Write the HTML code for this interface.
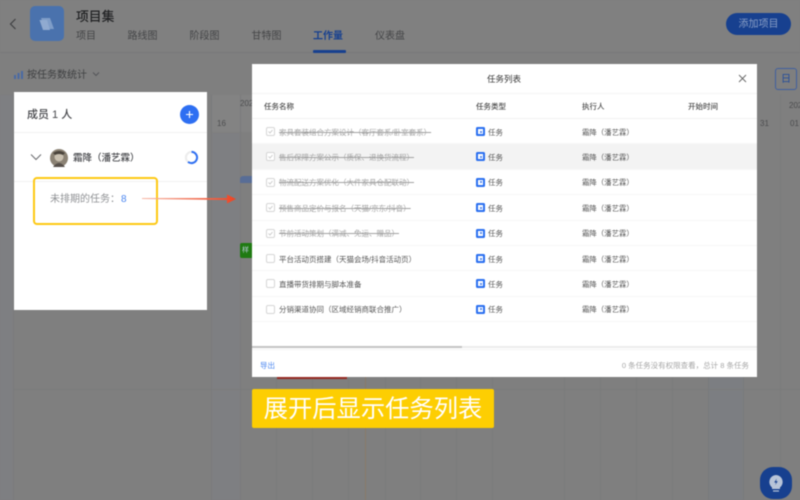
<!DOCTYPE html>
<html><head><meta charset="utf-8">
<style>
*{box-sizing:border-box;margin:0;padding:0}
html,body{width:800px;height:500px;overflow:hidden;background:#7f7f7f;font-family:"Liberation Sans","Noto Sans CJK SC",sans-serif}
.a{position:absolute;white-space:nowrap}
#root{position:relative;width:800px;height:500px;overflow:hidden;filter:blur(.4px)}
.vl{position:absolute;width:1px;top:95px;bottom:0;background:#7a7b7c}
.hl{position:absolute;left:13px;right:0;height:1px;background:#7a7b7c}
.tab{position:absolute;top:30px;font-size:10px;line-height:14px;color:#444547}
.row{position:absolute;left:252px;width:505px;height:25.4px;border-bottom:1px solid #f6f6f6}
.cb{position:absolute;left:13.5px;top:8px;width:9px;height:9px;border:1px solid #d6d6d6;border-radius:2px;background:#fff}
.cb svg{position:absolute;left:0;top:0}
.nm{position:absolute;left:27px;top:6.5px;font-size:7.5px;line-height:13px;color:#555;white-space:nowrap}
.done .nm{color:#a2a2a2;text-decoration:line-through}
.ic{position:absolute;left:224px;top:8px;width:9px;height:9px;border-radius:1.5px;background:#2a6ff0}
.ic i{position:absolute;left:2px;top:2px;width:5px;height:5px;background:#fff;display:block}
.ic i:after{content:"";position:absolute;left:1.5px;top:1.5px;width:2px;height:2px;background:#5f90ee}
.ty{position:absolute;left:236px;top:6.5px;font-size:7.5px;line-height:13px;color:#555}
.ex{position:absolute;left:330px;top:6.5px;font-size:7.4px;line-height:13px;color:#555;white-space:nowrap}
.th{position:absolute;top:100px;font-size:7.5px;line-height:13px;color:#4c4c4c;font-weight:500}
</style></head><body><div id="root">

<div class="a" style="left:0;top:0;width:800px;height:52px;background:#808080"></div>
<div class="a" style="left:0;top:52px;width:800px;height:1px;background:#78797a"></div>

<div class="a" style="left:0;top:95px;width:13px;height:405px;background:#7e7f82"></div>
<div class="a" style="left:211px;top:133px;width:29px;height:367px;background:#7e7f82"></div>
<div class="a" style="left:212px;top:95px;width:40px;height:37px;background:#838383"></div>
<div class="a" style="left:708px;top:377px;width:35px;height:123px;background:#7c7e82"></div>

<svg class="a" style="left:8px;top:17px" width="10" height="14" viewBox="0 0 10 14"><path d="M7.5 2 L2.5 7 L7.5 12" fill="none" stroke="#3f4042" stroke-width="1.2"/></svg>
<div class="a" style="left:30px;top:6px;width:34px;height:35px;border-radius:5px;background:#4a72ad"></div>
<svg class="a" style="left:38px;top:15px" width="20" height="18" viewBox="0 0 20 18"><path d="M3 3 H12 L16 14 H7 Z" fill="#7f9dc8"/><path d="M1.5 5 H9 L12 15 H5 Z" fill="#90aad0"/></svg>
<div class="a" style="left:76px;top:8px;font-size:12.8px;line-height:17px;color:#1f2022;font-weight:500">项目集</div>
<div class="tab" style="left:76px">项目</div>
<div class="tab" style="left:127.5px">路线图</div>
<div class="tab" style="left:189.5px">阶段图</div>
<div class="tab" style="left:251.5px">甘特图</div>
<div class="tab" style="left:313px;color:#17408f;font-weight:700">工作量</div>
<div class="tab" style="left:375px">仪表盘</div>
<div class="a" style="left:313px;top:50px;width:33px;height:2.5px;border-radius:1px;background:#17408f"></div>
<div class="a" style="left:726px;top:13px;width:65px;height:22px;border-radius:11px;background:#17408f"></div>
<div class="a" style="left:726px;top:15px;width:65px;height:22px;color:#8a9fc6;font-size:10px;line-height:20px;text-align:center">添加项目</div>

<svg class="a" style="left:13px;top:69px" width="11" height="11" viewBox="0 0 11 11"><rect x="1" y="6" width="2" height="4" fill="#4a6aa5"/><rect x="4.5" y="4" width="2" height="6" fill="#4a6aa5"/><rect x="8" y="2" width="2" height="8" fill="#4a6aa5"/></svg>
<div class="a" style="left:27px;top:69px;font-size:10px;line-height:14px;color:#3f4042">按任务数统计</div>
<svg class="a" style="left:91px;top:71px" width="10" height="7" viewBox="0 0 10 7"><path d="M2 1.5 L5 4.5 L8 1.5" fill="none" stroke="#55565a" stroke-width="1"/></svg>

<div class="vl" style="left:13px"></div>
<div class="vl" style="left:211px"></div>
<div class="vl" style="left:240px"></div>
<div class="vl" style="left:276px"></div>
<div class="vl" style="left:312px"></div>
<div class="vl" style="left:348px"></div>
<div class="vl" style="left:385px"></div>
<div class="vl" style="left:420px"></div>
<div class="vl" style="left:456px"></div>
<div class="vl" style="left:492px"></div>
<div class="vl" style="left:564px"></div>
<div class="vl" style="left:600px"></div>
<div class="vl" style="left:636px"></div>
<div class="vl" style="left:672px"></div>
<div class="vl" style="left:708px"></div>
<div class="vl" style="left:743px"></div>
<div class="vl" style="left:780px"></div>
<div class="hl" style="top:389px"></div>
<div class="a" style="left:365px;top:377px;width:1px;height:123px;background:#8a7a68"></div>

<div class="a" style="left:775px;top:68px;width:22px;height:22px;border:1px solid #3f5f9f;border-radius:3px"></div>
<div class="a" style="left:775px;top:70px;width:22px;height:20px;color:#1f4a9c;font-size:10px;line-height:20px;text-align:center">日</div>
<div class="a" style="left:760px;top:118px;font-size:8px;line-height:11px;color:#4c4d4f">31</div>
<div class="a" style="left:790px;top:118px;font-size:8px;line-height:11px;color:#4c4d4f">01</div>
<div class="a" style="left:789px;top:100px;font-size:8px;line-height:11px;color:#4c4d4f">202</div>
<div class="a" style="left:240px;top:98px;font-size:8px;line-height:11px;color:#4c4d4f">202</div>
<div class="a" style="left:217px;top:118px;font-size:8px;line-height:11px;color:#4c4d4f">16</div>

<div class="a" style="left:240px;top:176px;width:12px;height:7px;background:#586d96;border-radius:3px 0 0 0"></div>
<div class="a" style="left:240px;top:243px;width:12px;height:15px;background:#1f7a12;border-radius:2px 0 0 2px;color:#bcd;font-size:7px;line-height:15px;padding-left:2px;overflow:hidden">样</div>
<div class="a" style="left:277px;top:377px;width:70px;height:2px;background:#962a22"></div>

<!-- left panel -->
<div class="a" style="left:14px;top:92px;width:193px;height:218px;background:#fff"></div>
<div class="a" style="left:14px;top:132px;width:193px;height:1px;background:#f2f2f2"></div>
<div class="a" style="left:14px;top:181px;width:193px;height:1px;background:#f2f2f2"></div>
<div class="a" style="left:27px;top:107px;font-size:11px;line-height:16px;color:#45464a;font-weight:500">成员 1 人</div>
<div class="a" style="left:180px;top:105px;width:19px;height:19px;border-radius:50%;background:#2e6ff2"></div>
<svg class="a" style="left:180px;top:105px" width="19" height="19" viewBox="0 0 19 19"><path d="M9.5 6 V13 M6 9.5 H13" stroke="#fff" stroke-width="1.1"/></svg>
<svg class="a" style="left:30px;top:153px" width="12" height="9" viewBox="0 0 12 9"><path d="M1 1.5 L6 6.5 L11 1.5" fill="none" stroke="#6a6b6e" stroke-width="1"/></svg>
<svg class="a" style="left:50px;top:149px" width="18" height="18" viewBox="0 0 18 18"><circle cx="9" cy="9" r="9" fill="#8b8274"/><circle cx="9" cy="8" r="4.5" fill="#c9c0b0"/><path d="M3 4 Q9 0 15 4 L13 6 Q9 4 5 6 Z" fill="#4a443c"/><path d="M3 18 Q9 10 15 18 Z" fill="#57504a"/></svg>
<div class="a" style="left:73px;top:152px;font-size:9.5px;line-height:13px;color:#45464a;font-weight:500">霜降（潘艺霖）</div>
<svg class="a" style="left:184px;top:150px" width="15" height="15" viewBox="0 0 15 15"><circle cx="7.5" cy="7.5" r="5.6" fill="none" stroke="#ececec" stroke-width="2"/><path d="M7.5 1.9 A5.6 5.6 0 1 1 4 11.9" fill="none" stroke="#2e6ff2" stroke-width="2"/></svg>
<div class="a" style="left:33px;top:177px;width:125px;height:48px;border:2px solid #fdc813;border-radius:4px"></div>
<div class="a" style="left:50px;top:193px;font-size:10px;line-height:14px;color:#8f9194">未排期的任务：<span style="color:#4a86f0;margin-left:1px">8</span></div>
<svg class="a" style="left:140px;top:192px" width="100" height="14" viewBox="0 0 100 14"><defs><linearGradient id="g" x1="0" x2="1" y1="0" y2="0"><stop offset="0" stop-color="#f7b9a8"/><stop offset="1" stop-color="#ee4422"/></linearGradient></defs><path d="M2 6 L87 6 V2.5 L96 7 L87 11.5 V8 L2 7 Z" fill="url(#g)"/></svg>

<!-- modal -->
<div class="a" style="left:252px;top:64px;width:505px;height:313px;background:#fff"></div>
<div class="a" style="left:487px;top:72.5px;font-size:8.5px;line-height:13px;color:#333">任务列表</div>
<svg class="a" style="left:737px;top:73px" width="11" height="11" viewBox="0 0 11 11"><path d="M2 2 L9 9 M9 2 L2 9" stroke="#666" stroke-width="0.9"/></svg>
<div class="a" style="left:252px;top:93px;width:505px;height:1px;background:#f4f4f4"></div>
<div class="a" style="left:252px;top:118px;width:505px;height:1px;background:#f2f2f2"></div>
<div class="th" style="left:264px">任务名称</div>
<div class="th" style="left:476px">任务类型</div>
<div class="th" style="left:582px">执行人</div>
<div class="th" style="left:688px">开始时间</div>

<div class="row done" style="top:119px"><div class="cb"><svg width="7" height="7" viewBox="0 0 7 7"><path d="M1.5 3.5 L3 5 L5.5 2" fill="none" stroke="#c4c4c4" stroke-width=".8"/></svg></div><div class="nm">家具套装组合方案设计（客厅套系/卧室套系）</div><div class="ic"><i></i></div><div class="ty">任务</div><div class="ex">霜降（潘艺霖）</div></div>
<div class="row done" style="top:144.4px;background:#f3f3f3"><div class="cb"><svg width="7" height="7" viewBox="0 0 7 7"><path d="M1.5 3.5 L3 5 L5.5 2" fill="none" stroke="#c4c4c4" stroke-width=".8"/></svg></div><div class="nm">售后保障方案公示（质保、退换货流程）</div><div class="ic"><i></i></div><div class="ty">任务</div><div class="ex">霜降（潘艺霖）</div></div>
<div class="row done" style="top:169.8px"><div class="cb"><svg width="7" height="7" viewBox="0 0 7 7"><path d="M1.5 3.5 L3 5 L5.5 2" fill="none" stroke="#c4c4c4" stroke-width=".8"/></svg></div><div class="nm">物流配送方案优化（大件家具仓配联动）</div><div class="ic"><i></i></div><div class="ty">任务</div><div class="ex">霜降（潘艺霖）</div></div>
<div class="row done" style="top:195.2px"><div class="cb"><svg width="7" height="7" viewBox="0 0 7 7"><path d="M1.5 3.5 L3 5 L5.5 2" fill="none" stroke="#c4c4c4" stroke-width=".8"/></svg></div><div class="nm">预售商品定价与报名（天猫/京东/抖音）</div><div class="ic"><i></i></div><div class="ty">任务</div><div class="ex">霜降（潘艺霖）</div></div>
<div class="row done" style="top:220.6px"><div class="cb"><svg width="7" height="7" viewBox="0 0 7 7"><path d="M1.5 3.5 L3 5 L5.5 2" fill="none" stroke="#c4c4c4" stroke-width=".8"/></svg></div><div class="nm">节前活动策划（满减、免运、赠品）</div><div class="ic"><i></i></div><div class="ty">任务</div><div class="ex">霜降（潘艺霖）</div></div>
<div class="row" style="top:246px"><div class="cb"></div><div class="nm">平台活动页搭建（天猫会场/抖音活动页）</div><div class="ic"><i></i></div><div class="ty">任务</div><div class="ex">霜降（潘艺霖）</div></div>
<div class="row" style="top:271.4px"><div class="cb"></div><div class="nm">直播带货排期与脚本准备</div><div class="ic"><i></i></div><div class="ty">任务</div><div class="ex">霜降（潘艺霖）</div></div>
<div class="row" style="top:296.8px"><div class="cb"></div><div class="nm">分销渠道协同（区域经销商联合推广）</div><div class="ic"><i></i></div><div class="ty">任务</div><div class="ex">霜降（潘艺霖）</div></div>

<div class="a" style="left:252px;top:346px;width:505px;height:2px;background:#ececec"></div>
<div class="a" style="left:252px;top:346px;width:210px;height:2px;background:#c4c4c4"></div>
<div class="a" style="left:252px;top:349px;width:505px;height:1px;background:#f4f4f4"></div>
<div class="a" style="left:260px;top:359px;font-size:7.5px;line-height:13px;color:#4a86f0">导出</div>
<div class="a" style="right:51px;top:359px;font-size:7.5px;line-height:13px;color:#a6a6a6">0 条任务没有权限查看，总计 8 条任务</div>

<div class="a" style="left:252px;top:389px;width:242px;height:39px;border-radius:2px;background:#fdce02"></div>
<div class="a" style="left:252px;top:391px;width:242px;height:37px;color:#fff;font-size:24.3px;line-height:37px;text-align:center">展开后显示任务列表</div>

<div class="a" style="left:760px;top:467px;width:32px;height:32px;border-radius:13px;background:#17408f"></div>
<svg class="a" style="left:768px;top:474px" width="16" height="19" viewBox="0 0 16 19"><path d="M8 1 A7 7 0 0 1 12 13.5 V15 H4 V13.5 A7 7 0 0 1 8 1 Z" fill="#b8c4d8"/><path d="M5 17 H11" stroke="#b8c4d8" stroke-width="1.2"/><path d="M8.8 4.5 L6.2 8.5 H8 L7.2 11 L9.8 7.3 H8 Z" fill="#17408f"/></svg>
</div></body></html>
